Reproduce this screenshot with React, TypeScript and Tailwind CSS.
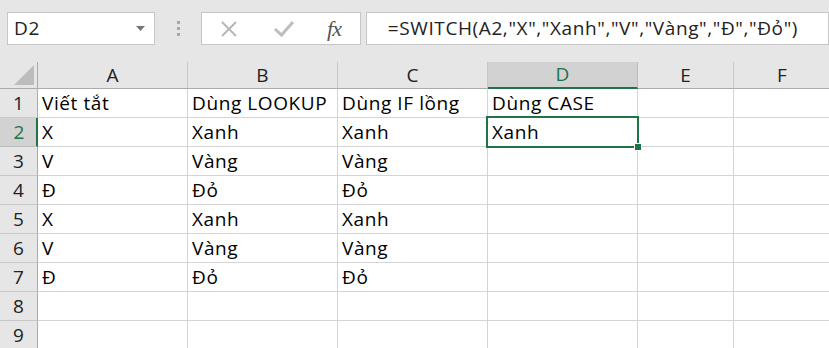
import React from "react";

const font = { fontFamily: '"Open Sans", "Noto Sans", sans-serif' };

const rows: string[][] = [
  ["Viết tắt", "Dùng LOOKUP", "Dùng IF lồng", "Dùng CASE", "", ""],
  ["X", "Xanh", "Xanh", "Xanh", "", ""],
  ["V", "Vàng", "Vàng", "", "", ""],
  ["Đ", "Đỏ", "Đỏ", "", "", ""],
  ["X", "Xanh", "Xanh", "", "", ""],
  ["V", "Vàng", "Vàng", "", "", ""],
  ["Đ", "Đỏ", "Đỏ", "", "", ""],
  ["", "", "", "", "", ""],
  ["", "", "", "", "", ""],
];

const cols = ["A", "B", "C", "D", "E", "F"];

export default function App() {
  return (
    <div
      className="w-[829px] h-[348px] overflow-hidden bg-[#e6e6e6] text-black"
      style={font}
    >
      {/* formula bar */}
      <div className="h-[62px] flex items-start pt-[12px] pl-[7px]">
        <div className="w-[150px] h-[33px] bg-white border border-[#c6c6c6] flex items-center pl-[6px] pr-[9px]">
          <span className="text-[19px] tracking-[0.6px] text-[#222] flex-1">D2</span>
          <svg width="9" height="5" viewBox="0 0 9 5">
            <path d="M0 0 L9 0 L4.5 5 Z" fill="#777" />
          </svg>
        </div>
        <div className="w-[47px] h-[33px] flex flex-col items-center justify-center gap-[3px]">
          <div className="w-[3px] h-[3px] bg-[#a8a8a8]" />
          <div className="w-[3px] h-[3px] bg-[#a8a8a8]" />
          <div className="w-[3px] h-[3px] bg-[#a8a8a8]" />
        </div>
        <div className="w-[162px] h-[33px] bg-white border border-[#c6c6c6] flex items-center">
          <div className="w-[54px] flex justify-center">
            <svg width="18" height="18" viewBox="0 0 18 18">
              <path d="M2 2 L16 16 M16 2 L2 16" stroke="#b5b5b5" strokeWidth="1.8" />
            </svg>
          </div>
          <div className="w-[56px] flex justify-center">
            <svg width="22" height="18" viewBox="0 0 22 18">
              <path d="M2 9 L8.5 15 L20 2" stroke="#bdbdbd" strokeWidth="3" fill="none" />
            </svg>
          </div>
          <div className="flex-1 flex justify-center pr-[4px]">
            <span
              className="text-[22px] italic text-[#555] tracking-[-1px]"
              style={{ fontFamily: '"Liberation Serif", "DejaVu Serif", serif' }}
            >
              fx
            </span>
          </div>
        </div>
        <div className="ml-[5px] w-[470px] h-[33px] bg-white border border-[#c6c6c6] flex items-center pl-[21px]">
          <span className="text-[19px] tracking-[0.6px] text-[#222] whitespace-nowrap">
            =SWITCH(A2,"X","Xanh","V","Vàng","Đ","Đỏ")
          </span>
        </div>
      </div>

      {/* grid */}
      <div className="grid grid-cols-[38px_150px_150px_150px_150px_96px_97px] bg-white">
        {/* header row */}
        <div className="h-[27px] bg-[#e6e6e6] border-r border-b border-[#ababab] relative">
          <svg className="absolute right-[3px] bottom-[3px]" width="20" height="20" viewBox="0 0 20 20">
            <path d="M20 0 L20 20 L0 20 Z" fill="#bdbdbd" />
          </svg>
        </div>
        {cols.map((c) =>
          c === "D" ? (
            <div
              key={c}
              className="h-[27px] bg-[#d2d2d2] border-r border-[#bdbdbd] border-b-2 border-b-[#217346] flex items-center justify-center text-[19px] text-[#217346]"
            >
              {c}
            </div>
          ) : (
            <div
              key={c}
              className="h-[27px] bg-[#e6e6e6] border-r border-[#c8c8c8] border-b border-b-[#ababab] flex items-center justify-center text-[19px] text-[#222]"
            >
              {c}
            </div>
          )
        )}
        {rows.map((r, i) => (
          <React.Fragment key={i}>
            {i === 1 ? (
              <div className="h-[29px] bg-[#d2d2d2] border-r-2 border-r-[#217346] border-b border-[#bdbdbd] flex items-center justify-center pl-[2px] text-[19px] text-[#217346]">
                {i + 1}
              </div>
            ) : (
              <div className="h-[29px] bg-[#e6e6e6] border-r border-[#ababab] border-b border-b-[#c8c8c8] flex items-center justify-center text-[19px] text-[#222]">
                {i + 1}
              </div>
            )}
            {r.map((v, j) => {
              const sel = i === 1 && j === 3;
              return (
                <div
                  key={j}
                  className={
                    "h-[29px] border-r border-b border-[#d4d4d4] relative flex items-end pl-[4px] pb-[1px] text-[19px] tracking-[0.6px] leading-[26px] whitespace-nowrap" +
                    (sel ? " z-10" : "")
                  }
                >
                  {v}
                  {sel && (
                    <>
                      <div className="absolute left-[-2px] top-[-2px] right-[-2px] bottom-[-2px] border-2 border-[#217346] pointer-events-none" />
                      <div className="absolute right-[-5px] bottom-[-5px] w-[8px] h-[8px] bg-[#217346] border border-white" />
                    </>
                  )}
                </div>
              );
            })}
          </React.Fragment>
        ))}
      </div>
    </div>
  );
}
